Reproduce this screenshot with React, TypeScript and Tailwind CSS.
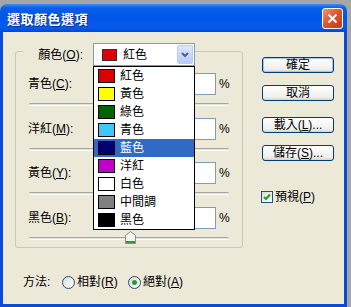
const colors = [
  { name: "紅色", swatch: "bg-[#dc0000]" },
  { name: "黃色", swatch: "bg-[#ffff00]" },
  { name: "綠色", swatch: "bg-[#006400]" },
  { name: "青色", swatch: "bg-[#3cc8f8]" },
  { name: "藍色", swatch: "bg-[#000070]" },
  { name: "洋紅", swatch: "bg-[#c000c8]" },
  { name: "白色", swatch: "bg-white" },
  { name: "中間調", swatch: "bg-[#808080]" },
  { name: "黑色", swatch: "bg-black" },
];

const rows = [
  { label: "青色", key: "C", h: "h-[45px]" },
  { label: "洋紅", key: "M", h: "h-[44px]" },
  { label: "黃色", key: "Y", h: "h-[45px]" },
  { label: "黑色", key: "B", h: "h-[45px]" },
];

const Key = ({ k }: { k: string }) => (
  <>
    (<span className="underline underline-offset-1">{k}</span>)
  </>
);

const Thumb = () => (
  <svg
    className="absolute left-[96px] top-[-7px]"
    width="11"
    height="13"
    viewBox="0 0 11 13"
  >
    <path d="M0.5 4.5 L5.5 0.5 L10.5 4.5 V12.5 H0.5 Z" fill="#f5f4ef" stroke="#8d8d86" />
    <rect x="1" y="10" width="9" height="2" fill="#2aa02a" />
  </svg>
);

const Slider = () => (
  <div className="relative ml-[13px] mt-[8px] h-[3px] w-[200px] rounded-full border-t border-b border-t-[#a5a49e] border-b-white bg-[#e4e2d8]">
    <Thumb />
  </div>
);

const Button = ({ children, primary }: { children: React.ReactNode; primary?: boolean }) => (
  <div
    className={`flex h-[16px] w-[72px] items-center justify-center rounded-[3px] border border-[#003c74] bg-[linear-gradient(to_bottom,#ffffff,#f0efea_80%,#d8d2c6)] text-[12px] leading-none text-black ${
      primary ? "shadow-[inset_0_0_0_1px_#a8c4f0]" : ""
    }`}
  >
    {children}
  </div>
);

const Radio = ({ checked }: { checked?: boolean }) => (
  <div className="flex h-[13px] w-[13px] items-center justify-center rounded-full border border-[#1c5180] bg-[linear-gradient(135deg,#dcdcd6,#ffffff)]">
    {checked && <div className="h-[5px] w-[5px] rounded-full bg-[#21a121]" />}
  </div>
);

export default function App() {
  return (
    <div className="h-[307px] w-[351px] overflow-hidden bg-[#a6a6a6] pt-[4px] font-['Liberation_Sans','Noto_Sans_CJK_TC',sans-serif]">
      <div className="flex w-[347px] flex-col">
        {/* title bar */}
        <div className="flex h-[28px] items-center justify-between rounded-t-[7px] bg-[linear-gradient(to_bottom,#3d8df5_0%,#0a5ee8_14%,#0055e5_50%,#045cee_85%,#0046cf_100%)] pl-[7px] pr-[4px]">
          <span className="text-[13px] font-bold leading-none tracking-[0.5px] text-white [text-shadow:1px_1px_0_#0a2a8a] font-['Noto_Sans_CJK_TC',sans-serif]">
            選取顏色選項
          </span>
          <div className="flex h-[21px] w-[21px] items-center justify-center rounded-[3px] border border-white bg-[linear-gradient(135deg,#ec9274,#d8552e_50%,#c13a14)]">
            <svg width="11" height="11" viewBox="0 0 11 11">
              <path d="M1.5 1.5 L9.5 9.5 M9.5 1.5 L1.5 9.5" stroke="white" strokeWidth="2" />
            </svg>
          </div>
        </div>

        {/* body */}
        <div className="flex h-[275px] border-x-[3px] border-b-[3px] border-[#0a4ad8] bg-[#ece9d8] text-[12px] text-black">
          <div className="flex flex-col">
            {/* group box */}
            <div className="ml-[12px] mt-[19px] flex h-[197px] w-[228px] flex-col rounded-[3px] border border-[#c9c7b6]">
              <div className="-mt-[9px] flex h-[23px] items-center">
                <div className="ml-[7px] flex h-[23px] w-[70px] items-center justify-end bg-[#ece9d8] pr-[10px]">
                  顏色<Key k="O" />:
                </div>
                <div className="relative flex h-[23px] w-[102px] items-center border border-[#7f9db9] bg-white">
                  <div className="ml-[8px] h-[12px] w-[15px] border border-[#333] bg-[#dc0000]" />
                  <span className="ml-[6px] flex-1">紅色</span>
                  <div className="mr-px flex h-[19px] w-[16px] items-center justify-center rounded-[2px] border border-[#bccbf3] bg-[linear-gradient(to_bottom,#dde6fd,#b9cbf8)]">
                    <svg width="8" height="6" viewBox="0 0 8 6">
                      <path d="M1 1 L4 4 L7 1" fill="none" stroke="#4d6185" strokeWidth="2" />
                    </svg>
                  </div>
                  {/* open list */}
                  <div className="absolute -left-px top-[22px] z-10 flex w-[102px] flex-col border border-black bg-white">
                    {colors.map((c, i) => (
                      <div
                        key={c.name}
                        className={`flex h-[18px] items-center ${i === 4 ? "bg-[#316ac5] text-white" : ""}`}
                      >
                        <div className={`ml-[4px] h-[14px] w-[17px] border border-black ${c.swatch}`} />
                        <span className="ml-[5px] text-[12px]">{c.name}</span>
                      </div>
                    ))}
                  </div>
                </div>
              </div>

              <div className="mt-[7px] flex flex-col">
                {rows.map((r) => (
                  <div key={r.key} className={r.h}>
                    <div className="flex h-[22px] items-center">
                      <div className="w-[154px] pl-[12px]">
                        {r.label}
                        <Key k={r.key} />:
                      </div>
                      <div className="h-[22px] w-[46px] border border-[#7f9db9] bg-white" />
                      <span className="pl-[3px]">%</span>
                    </div>
                    <Slider />
                  </div>
                ))}
              </div>
            </div>

            {/* method */}
            <div className="ml-[20px] mt-[27px] flex h-[14px] items-center">
              <span className="w-[39px]">方法:</span>
              <Radio />
              <span className="ml-[2px] w-[51px]">
                相對<Key k="R" />
              </span>
              <Radio checked />
              <span className="ml-[2px]">
                絕對<Key k="A" />
              </span>
            </div>
          </div>

          {/* buttons */}
          <div className="ml-[19px] mt-[25px] flex flex-col">
            <Button primary>確定</Button>
            <div className="mt-[12px]">
              <Button>取消</Button>
            </div>
            <div className="mt-[16px]">
              <Button>
                載入<Key k="L" />...
              </Button>
            </div>
            <div className="mt-[12px]">
              <Button>
                儲存<Key k="S" />...
              </Button>
            </div>
            <div className="ml-[-1px] mt-[27px] flex items-center">
              <div className="flex h-[12px] w-[12px] items-center justify-center border border-[#1c5180] bg-[linear-gradient(135deg,#dcdcd6,#ffffff)]">
                <svg width="8" height="8" viewBox="0 0 8 8">
                  <path d="M1 4 L3 6 L7 1.5" fill="none" stroke="#21a121" strokeWidth="2" />
                </svg>
              </div>
              <span className="ml-[2px]">
                預視<Key k="P" />
              </span>
            </div>
          </div>
        </div>
      </div>
    </div>
  );
}
